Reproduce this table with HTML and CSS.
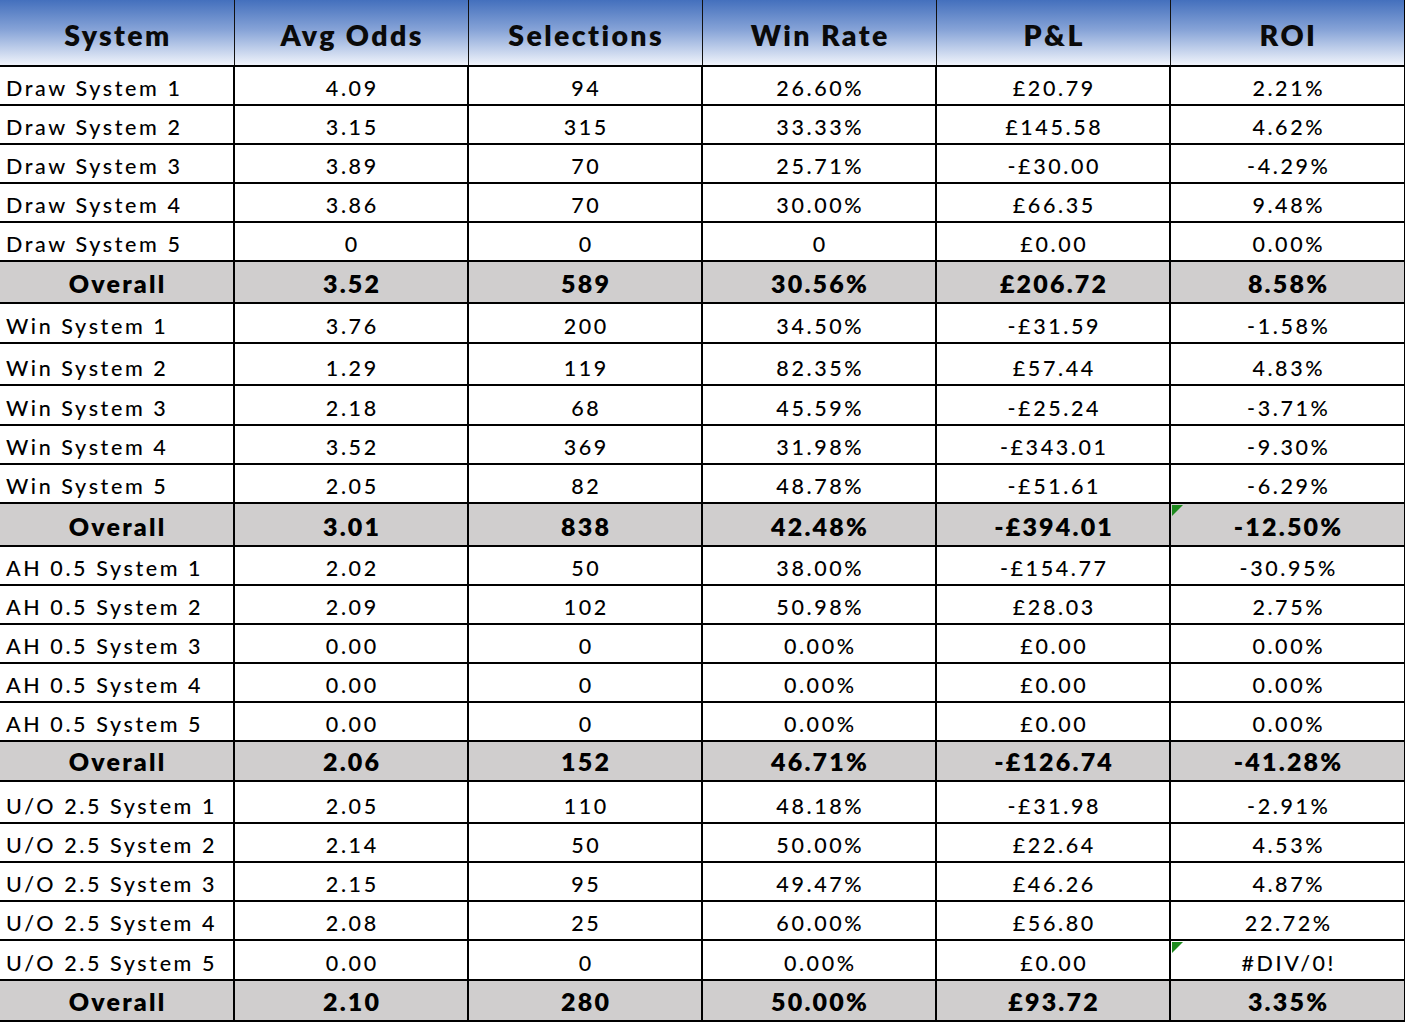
FILE: index.html
```html
<!DOCTYPE html>
<html lang="en">
<head>
<meta charset="utf-8">
<title>Systems</title>
<link rel="stylesheet" href="styles.css">
</head>
<body>
<table class="sheet">
  <colgroup>
    <col class="c"><col class="c"><col class="c"><col class="c"><col class="c"><col class="c last">
  </colgroup>
  <thead>
    <tr class="head">
      <th>System</th><th>Avg Odds</th><th>Selections</th><th>Win Rate</th><th>P&amp;L</th><th>ROI</th>
    </tr>
  </thead>
  <tbody>
    <tr class="h39"><td class="name">Draw System 1</td><td>4.09</td><td>94</td><td>26.60%</td><td>£20.79</td><td>2.21%</td></tr>
    <tr class="h39"><td class="name">Draw System 2</td><td>3.15</td><td>315</td><td>33.33%</td><td>£145.58</td><td>4.62%</td></tr>
    <tr class="h39"><td class="name">Draw System 3</td><td>3.89</td><td>70</td><td>25.71%</td><td>-£30.00</td><td>-4.29%</td></tr>
    <tr class="h39"><td class="name">Draw System 4</td><td>3.86</td><td>70</td><td>30.00%</td><td>£66.35</td><td>9.48%</td></tr>
    <tr class="h39"><td class="name">Draw System 5</td><td>0</td><td>0</td><td>0</td><td>£0.00</td><td>0.00%</td></tr>
    <tr class="total h42"><td>Overall</td><td>3.52</td><td>589</td><td>30.56%</td><td>£206.72</td><td>8.58%</td></tr>

    <tr class="h40"><td class="name">Win System 1</td><td>3.76</td><td>200</td><td>34.50%</td><td>-£31.59</td><td>-1.58%</td></tr>
    <tr class="h42"><td class="name">Win System 2</td><td>1.29</td><td>119</td><td>82.35%</td><td>£57.44</td><td>4.83%</td></tr>
    <tr class="h40"><td class="name">Win System 3</td><td>2.18</td><td>68</td><td>45.59%</td><td>-£25.24</td><td>-3.71%</td></tr>
    <tr class="h39"><td class="name">Win System 4</td><td>3.52</td><td>369</td><td>31.98%</td><td>-£343.01</td><td>-9.30%</td></tr>
    <tr class="h39"><td class="name">Win System 5</td><td>2.05</td><td>82</td><td>48.78%</td><td>-£51.61</td><td>-6.29%</td></tr>
    <tr class="total h43"><td>Overall</td><td>3.01</td><td>838</td><td>42.48%</td><td>-£394.01</td><td class="note">-12.50%</td></tr>

    <tr class="h39"><td class="name">AH 0.5 System 1</td><td>2.02</td><td>50</td><td>38.00%</td><td>-£154.77</td><td>-30.95%</td></tr>
    <tr class="h39"><td class="name">AH 0.5 System 2</td><td>2.09</td><td>102</td><td>50.98%</td><td>£28.03</td><td>2.75%</td></tr>
    <tr class="h39"><td class="name">AH 0.5 System 3</td><td>0.00</td><td>0</td><td>0.00%</td><td>£0.00</td><td>0.00%</td></tr>
    <tr class="h39"><td class="name">AH 0.5 System 4</td><td>0.00</td><td>0</td><td>0.00%</td><td>£0.00</td><td>0.00%</td></tr>
    <tr class="h39"><td class="name">AH 0.5 System 5</td><td>0.00</td><td>0</td><td>0.00%</td><td>£0.00</td><td>0.00%</td></tr>
    <tr class="total h40"><td>Overall</td><td>2.06</td><td>152</td><td>46.71%</td><td>-£126.74</td><td>-41.28%</td></tr>

    <tr class="h42"><td class="name">U/O 2.5 System 1</td><td>2.05</td><td>110</td><td>48.18%</td><td>-£31.98</td><td>-2.91%</td></tr>
    <tr class="h39"><td class="name">U/O 2.5 System 2</td><td>2.14</td><td>50</td><td>50.00%</td><td>£22.64</td><td>4.53%</td></tr>
    <tr class="h39"><td class="name">U/O 2.5 System 3</td><td>2.15</td><td>95</td><td>49.47%</td><td>£46.26</td><td>4.87%</td></tr>
    <tr class="h39"><td class="name">U/O 2.5 System 4</td><td>2.08</td><td>25</td><td>60.00%</td><td>£56.80</td><td>22.72%</td></tr>
    <tr class="h40"><td class="name">U/O 2.5 System 5</td><td>0.00</td><td>0</td><td>0.00%</td><td>£0.00</td><td class="note">#DIV/0!</td></tr>
    <tr class="total h41"><td>Overall</td><td>2.10</td><td>280</td><td>50.00%</td><td>£93.72</td><td>3.35%</td></tr>
  </tbody>
</table>
</body>
</html>
```

FILE: styles.css
```css
html, body {
  margin: 0;
  padding: 0;
  background: #ffffff;
}

body {
  font-family: Lato, "Open Sans", "Liberation Sans", sans-serif;
  color: #000000;
}

.sheet {
  border-collapse: collapse;
  table-layout: fixed;
  width: 1405px;
}

.sheet col.c {
  width: 234px;
}

.sheet col.last {
  width: 235px;
}

.head {
  height: 66px;
  background: linear-gradient(180deg, #4470bd 0%, #86a3d7 45%, #f3f6fc 100%);
}

.head th {
  font-size: 28.5px;
  font-weight: 800;
  text-align: center;
  vertical-align: middle;
  padding: 4px 0 0 2.4px;
  border-left: 1px solid #111;
  border-right: 1px solid #111;
  border-bottom: 2px solid #000;
  letter-spacing: 2.4px;
  color: #0a0a0a;
}

.head th:first-child {
  border-left: none;
}

.head th:last-child {
  border-right: 2px solid #000;
}

.sheet td {
  border: 2px solid #000;
  font-size: 21.5px;
  font-weight: 500;
  text-align: center;
  vertical-align: bottom;
  padding: 0 0 3px 2.6px;
  line-height: 26px;
  letter-spacing: 2.6px;
  white-space: nowrap;
  position: relative;
}

.sheet td:first-child {
  border-left: none;
}

.sheet td.name {
  text-align: left;
  padding-left: 6px;
}

.total {
  background: #d0cece;
}

.sheet .total td {
  font-weight: 800;
  font-size: 25px;
  letter-spacing: 2.2px;
  padding-left: 2.2px;
  padding-bottom: 6px;
}

.h39 { height: 39px; }
.h40 { height: 40px; }
.h41 { height: 41px; }
.h42 { height: 42px; }
.h43 { height: 43px; }

.note::before {
  content: "";
  position: absolute;
  left: 1px;
  top: 1px;
  width: 0;
  height: 0;
  border-top: 11px solid #1d8a1d;
  border-right: 11px solid transparent;
}
```
